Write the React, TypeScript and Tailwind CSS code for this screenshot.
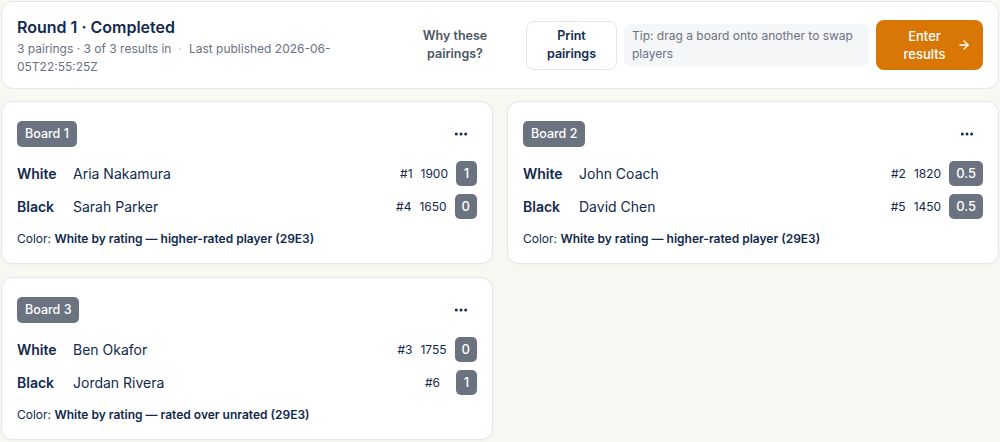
import { ArrowRight, MoreHorizontal } from 'lucide-react';

interface Seat {
  name: string;
  seed: number;
  rating?: number;
  score: string;
}

interface Board {
  id: number;
  white: Seat;
  black: Seat;
  reason: string;
}

const BOARDS: Board[] = [
  {
    id: 1,
    white: { name: 'Aria Nakamura', seed: 1, rating: 1900, score: '1' },
    black: { name: 'Sarah Parker', seed: 4, rating: 1650, score: '0' },
    reason: 'White by rating — higher-rated player (29E3)',
  },
  {
    id: 2,
    white: { name: 'John Coach', seed: 2, rating: 1820, score: '0.5' },
    black: { name: 'David Chen', seed: 5, rating: 1450, score: '0.5' },
    reason: 'White by rating — higher-rated player (29E3)',
  },
  {
    id: 3,
    white: { name: 'Ben Okafor', seed: 3, rating: 1755, score: '0' },
    black: { name: 'Jordan Rivera', seed: 6, score: '1' },
    reason: 'White by rating — rated over unrated (29E3)',
  },
];

function SeatRow({ color, seat }: { color: string; seat: Seat }) {
  return (
    <div className="flex items-center h-[25px]">
      <span className="w-14 shrink-0 text-[14px] font-semibold text-[#12294d]">{color}</span>
      <span className="flex-1 text-[14px] text-[#12294d]">{seat.name}</span>
      <div className="flex items-center gap-2 text-[12px] text-[#12294d]">
        <span>#{seat.seed}</span>
        <span>{seat.rating ?? ''}</span>
        <span className="flex items-center justify-center h-[25px] min-w-[21px] px-[7px] rounded-[5px] bg-[#6b7280] text-white text-[13px] font-medium">
          {seat.score}
        </span>
      </div>
    </div>
  );
}

function BoardCard({ board }: { board: Board }) {
  return (
    <div className="bg-white border border-[#e3e6ea] rounded-xl px-[15px] pt-[19px] pb-4 shadow-[0_1px_2px_rgba(0,0,0,0.03)]">
      <div className="flex items-center justify-between h-[26px]">
        <span className="flex items-center h-[26px] px-2 rounded-[5px] bg-[#6b7280] text-white text-[12.5px] font-medium">
          Board {board.id}
        </span>
        <button className="flex items-center justify-center w-8 h-8 text-[#12294d]">
          <MoreHorizontal className="w-4 h-4" strokeWidth={2.5} />
        </button>
      </div>
      <div className="mt-[14px] flex flex-col gap-2">
        <SeatRow color="White" seat={board.white} />
        <SeatRow color="Black" seat={board.black} />
      </div>
      <p className="mt-[12px] text-[12px] leading-4 text-[#12294d]">
        Color: <span className="font-semibold">{board.reason}</span>
      </p>
    </div>
  );
}

export default function App() {
  return (
    <div className="min-h-screen bg-[#f8f7f2] p-px font-['Inter',sans-serif]">
      <div className="flex flex-col gap-3">
        <header className="flex items-center h-[88px] bg-white border border-[#e3e6ea] rounded-xl pl-[15px] pr-[15px]">
          <div className="flex-1 min-w-0 pr-4">
            <h1 className="mt-[1px] text-[16px] leading-[22px] font-semibold text-[#12294d]">Round 1 · Completed</h1>
            <p className="mt-[2px] max-w-[330px] text-[12px] leading-[18px] text-[#6b7280]">
              3 pairings · 3 of 3 results in<span className="mx-[7px] text-[#c4c8ce]">·</span>Last published 2026-06-05T22:55:25Z
            </p>
          </div>
          <div className="flex items-center gap-[7px]">
            <button className="w-[128px] text-center text-[12.5px] leading-[18px] font-semibold text-[#4b5563]">
              Why these
              <br />
              pairings?
            </button>
            <button className="w-[91px] h-[49px] rounded-lg border border-[#e3e6ea] bg-white text-[12.5px] leading-[18px] font-semibold text-[#12294d]">
              Print
              <br />
              pairings
            </button>
            <div className="w-[245px] h-[42px] rounded-md bg-[#f5f6f8] px-2 py-[3px] text-[12px] leading-[18px] text-[#6b7280]">
              Tip: drag a board onto another to swap players
            </div>
            <button className="flex items-center w-[107px] h-[50px] rounded-lg bg-[#d97706] pl-4 pr-3 text-white">
              <span className="flex-1 text-center text-[13px] leading-[18px] font-medium">
                Enter
                <br />
                results
              </span>
              <ArrowRight className="w-3.5 h-3.5" strokeWidth={2.25} />
            </button>
          </div>
        </header>
        <div className="grid grid-cols-2 gap-x-[14px] gap-y-[13px]">
          {BOARDS.map((b) => (
            <BoardCard key={b.id} board={b} />
          ))}
        </div>
      </div>
    </div>
  );
}
